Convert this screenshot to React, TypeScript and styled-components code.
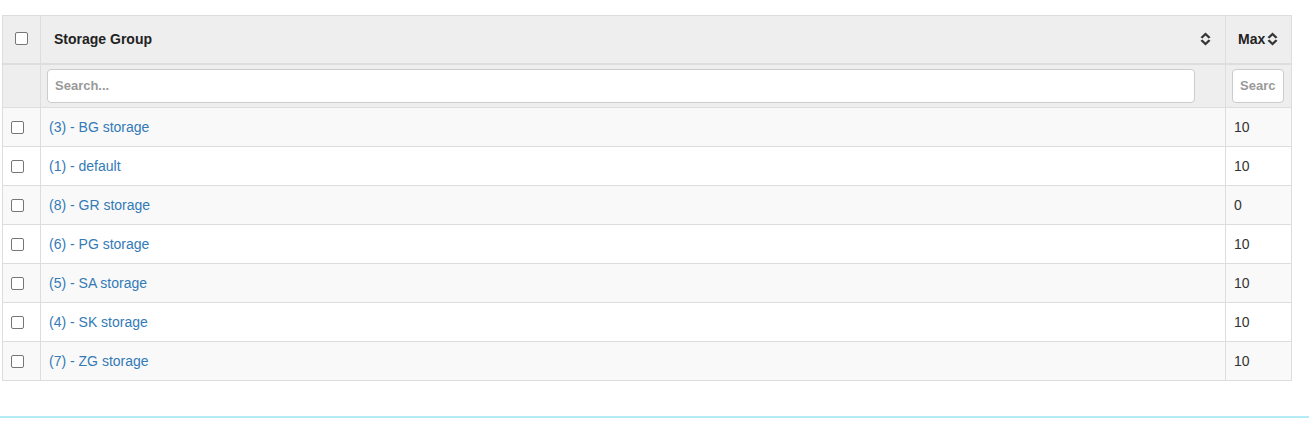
import React from "react";
import styled, { createGlobalStyle } from "styled-components";

const Global = createGlobalStyle`
  html, body { margin: 0; overflow: hidden; font-family: "Liberation Sans", Arial, sans-serif; font-size: 14px; color: #333; background: #fff; }
  * { box-sizing: border-box; }
`;

const Page = styled.div`
  width: 1309px;
  height: 422px;
  padding: 15px 0 0 2px;
  display: flex;
  flex-direction: column;
  overflow: hidden;
`;

const Table = styled.table`
  width: 1290px;
  border-collapse: collapse;
  border: 1px solid #ddd;
  table-layout: fixed;
`;

const HeadCell = styled.th<{ $w?: number; $pl?: number }>`
  width: ${(p) => (p.$w ? `${p.$w}px` : "auto")};
  height: 48px;
  background: #eeeeee;
  border: 1px solid #ddd;
  border-bottom: 2px solid #ddd;
  text-align: left;
  font-size: 14px;
  font-weight: bold;
  color: #222;
  padding: 0 8px 0 ${(p) => p.$pl ?? 8}px;
  vertical-align: middle;
`;

const HeadInner = styled.div<{ $spread?: boolean }>`
  display: flex;
  align-items: center;
  justify-content: ${(p) => (p.$spread ? "space-between" : "flex-start")};
  gap: 2px;
`;

const SortSlot = styled.span<{ $mr?: number }>`
  display: flex;
  margin-right: ${(p) => p.$mr ?? 0}px;
`;

const FilterCell = styled.td<{ $pr?: number; $pl?: number }>`
  background: #eeeeee;
  border: 1px solid #ddd;
  height: 44px;
  padding: 0 ${(p) => p.$pr ?? 30}px 0 ${(p) => p.$pl ?? 6}px;
`;

const SearchInput = styled.input`
  width: 100%;
  height: 34px;
  border: 1px solid #ccc;
  border-radius: 4px;
  padding: 0 7px;
  font-family: "Liberation Sans", Arial, sans-serif;
  font-size: 13px;
  font-weight: bold;
  color: #555;
  background: #fff;
  outline: none;
  &::placeholder { color: #999; }
`;

const Row = styled.tr<{ $odd: boolean }>`
  background: ${(p) => (p.$odd ? "#f9f9f9" : "#fff")};
`;

const Cell = styled.td`
  border: 1px solid #ddd;
  height: 39px;
  padding: 0 8px;
  vertical-align: middle;
  font-size: 14px;
`;

const CheckCell = styled(Cell)`
  padding: 0 0 0 8px;
`;

const Box = styled.span<{ $mt?: number }>`
  display: block;
  width: 13px;
  height: 13px;
  margin-top: ${(p) => p.$mt ?? 0}px;
  border: 1px solid #767676;
  border-radius: 2px;
  background: #fff;
`;

const Link = styled.a`
  color: #337ab7;
  text-decoration: none;
`;

const Divider = styled.div`
  margin-top: 35px;
  margin-left: -2px;
  width: 1309px;
  height: 2px;
  flex-shrink: 0;
  background: #b3ebf6;
`;

const Sort = () => (
  <svg width="11" height="14" viewBox="0 0 11 14">
    <path d="M5.5 0.5 L10.5 5.3 L8.6 6.6 L5.5 3.6 L2.4 6.6 L0.5 5.3 Z" fill="#333" />
    <path d="M5.5 13.5 L10.5 8.7 L8.6 7.4 L5.5 10.4 L2.4 7.4 L0.5 8.7 Z" fill="#333" />
  </svg>
);

const rows = [
  ["(3) - BG storage", "10"],
  ["(1) - default", "10"],
  ["(8) - GR storage", "0"],
  ["(6) - PG storage", "10"],
  ["(5) - SA storage", "10"],
  ["(4) - SK storage", "10"],
  ["(7) - ZG storage", "10"],
];

export default function App() {
  return (
    <Page>
      <Global />
      <Table>
        <thead>
          <tr>
            <HeadCell $w={38} $pl={12}>
              <Box $mt={-2} />
            </HeadCell>
            <HeadCell $pl={13}>
              <HeadInner $spread>
                <span>Storage Group</span>
                <SortSlot $mr={6}>
                  <Sort />
                </SortSlot>
              </HeadInner>
            </HeadCell>
            <HeadCell $w={66} $pl={12}>
              <HeadInner>
                <span>Max</span>
                <SortSlot>
                  <Sort />
                </SortSlot>
              </HeadInner>
            </HeadCell>
          </tr>
          <tr>
            <FilterCell />
            <FilterCell $pl={6} $pr={30}>
              <SearchInput placeholder="Search..." />
            </FilterCell>
            <FilterCell $pl={6} $pr={7}>
              <SearchInput placeholder="Search..." />
            </FilterCell>
          </tr>
        </thead>
        <tbody>
          {rows.map(([name, max], i) => (
            <Row key={name} $odd={i % 2 === 0}>
              <CheckCell>
                <Box />
              </CheckCell>
              <Cell>
                <Link href="#">{name}</Link>
              </Cell>
              <Cell>{max}</Cell>
            </Row>
          ))}
        </tbody>
      </Table>
      <Divider />
    </Page>
  );
}
